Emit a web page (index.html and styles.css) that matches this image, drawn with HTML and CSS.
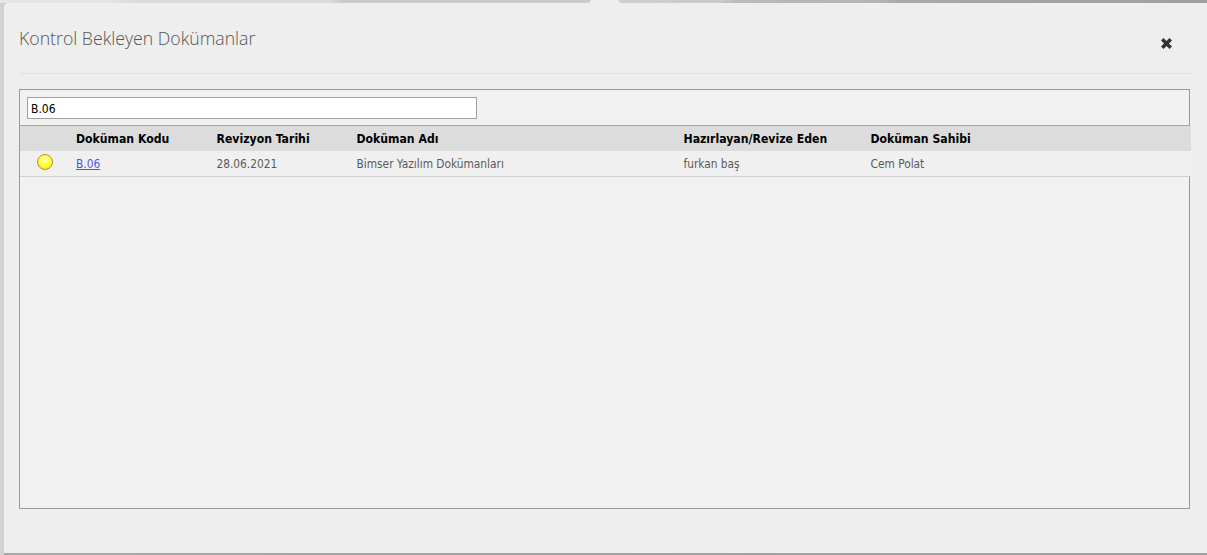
FILE: index.html
```html
<!DOCTYPE html>
<html lang="tr">
<head>
<meta charset="utf-8">
<title>Kontrol Bekleyen Dokümanlar</title>
<link rel="stylesheet" href="styles.css">
</head>
<body>
<div class="notch"></div>
<main class="modal">
  <header class="modal-header">
    <h1 class="modal-title">Kontrol Bekleyen Dokümanlar</h1>
    <button class="close" aria-label="Kapat">
      <svg width="11" height="11" viewBox="0 0 11 11"><path d="M2.5 0 5.5 3 8.5 0 11 2.5 8 5.5 11 8.5 8.5 11 5.5 8 2.5 11 0 8.5 3 5.5 0 2.5Z" fill="#333"/></svg>
    </button>
  </header>
  <section class="panel">
    <div class="filter"><input class="filter-input" type="text" value="B.06"></div>
    <div class="grid-row head">
      <span></span>
      <span>Doküman Kodu</span>
      <span>Revizyon Tarihi</span>
      <span>Doküman Adı</span>
      <span>Hazırlayan/Revize Eden</span>
      <span>Doküman Sahibi</span>
    </div>
    <div class="grid-row item">
      <span class="dot"></span>
      <a href="#">B.06</a>
      <span>28.06.2021</span>
      <span>Bimser Yazılım Dokümanları</span>
      <span>furkan baş</span>
      <span>Cem Polat</span>
    </div>
  </section>
</main>
</body>
</html>
```
FILE: styles.css
```css
* { box-sizing: border-box; }
html, body { height: 100%; margin: 0; }
body {
  position: relative;
  overflow: hidden;
  padding: 3px 0 2px 4px;
  background:
    linear-gradient(90deg, #e6e6e6 0, #e4e4e4 110px, #dcdcdc 130px, #dadada 330px, #c9c9c9 345px, #cacaca 580px, #cfcfcf 620px, #c8c8c8 720px, #b9b9b9 740px, #b4b4b4 880px, #a9a9a9 900px, #a4a4a4 1000px, #a0a0a0 100%) top / 100% 3px no-repeat,
    linear-gradient(90deg, #d2d2d2 0, #d2d2d2 4px, #a8a8a8 4px, #a0a0a0 100%);
  font-family: "DejaVu Sans Condensed", "DejaVu Sans", sans-serif;
}
.notch {
  position: absolute;
  top: 0;
  left: 589px;
  width: 31px;
  height: 3px;
  background: #eeeeee;
  clip-path: polygon(0 100%, 2px 0, calc(100% - 2px) 0, 100% 100%);
}
.modal {
  height: 550px;
  padding: 0 15px;
  border-radius: 3px 0 0 0;
  background: #eeeeee;
}
.modal-header {
  display: flex;
  justify-content: space-between;
  align-items: flex-start;
  height: 71px;
  border-bottom: 1px solid #e2e2e2;
}
.modal-title {
  margin: 0;
  padding-top: 22px;
  font-family: "Open Sans", sans-serif;
  font-size: 17.7px;
  line-height: 26px;
  font-weight: 300;
  color: #555;
}
.close {
  display: flex;
  width: 11px;
  height: 11px;
  margin: 35px 20px 0 0;
  padding: 0;
  border: 0;
  background: none;
}
.panel {
  width: 1171px;
  height: 420px;
  margin-top: 15px;
  border: 1px solid #999;
  background: #f1f1f1;
}
.filter {
  height: 36px;
  padding: 7px;
  border-bottom: 1px solid #a6a6a6;
}
.filter-input {
  display: block;
  width: 450px;
  height: 22px;
  padding: 1px 3px 0;
  border: 1px solid #a0a0a0;
  background: #fff;
  font: 12px "DejaVu Sans Condensed", "DejaVu Sans", sans-serif;
  color: #000;
}
.grid-row {
  display: grid;
  grid-template-columns: 56px 140.5px 140px 327px 187px 1fr;
  align-items: center;
  width: 1171px;
}
.head {
  height: 25px;
  background: #dcdcdc;
  font-size: 12.15px;
  font-weight: 700;
  color: #000;
}
.item {
  height: 26px;
  border-bottom: 1px solid #cfcfcf;
  background: #f0f0f0;
  font-size: 11.8px;
  color: #5a5a5a;
}
.item a { color: #5050f0; }
.dot {
  justify-self: start;
  width: 16px;
  height: 16px;
  margin-left: 17px;
  margin-top: -3px;
  border: 1px solid #b8912c;
  border-radius: 50%;
  background: radial-gradient(circle at 50% 35%, #ffffc8 0, #ffff30 50%, #eedd00 100%);
}
```
